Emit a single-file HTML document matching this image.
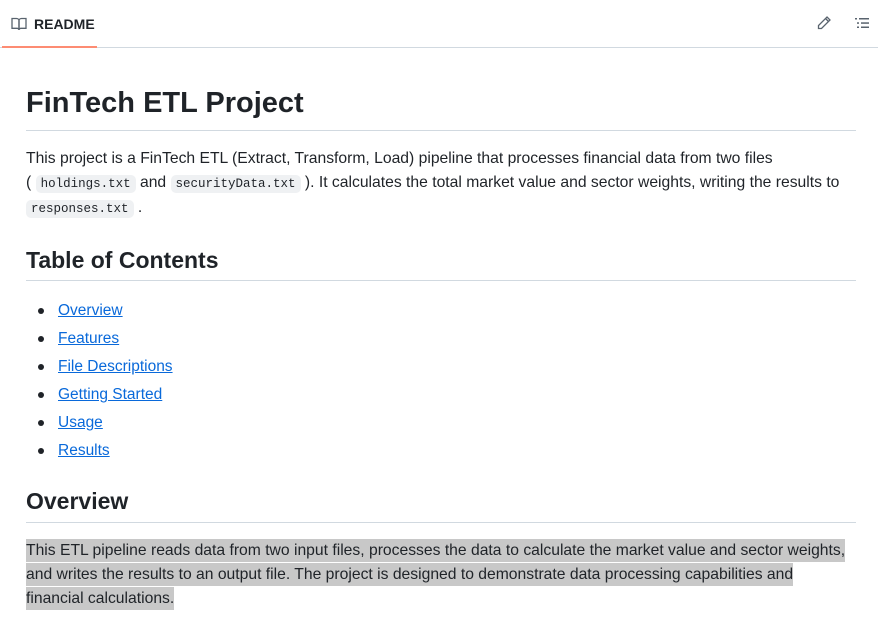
<!DOCTYPE html>
<html><head><meta charset="utf-8"><style>
*{margin:0;padding:0;box-sizing:border-box}
body{width:878px;height:628px;overflow:hidden;background:#fff;font-family:"Liberation Sans",sans-serif;color:#1f2328;position:relative}
.hdr{position:absolute;left:0;top:0;width:878px;height:48px;border-bottom:1px solid #d1d9e0}
.tab{position:absolute;left:2px;top:0;width:95px;height:48px;border-bottom:2px solid #fd8c73}
.tab span{position:absolute;left:32px;top:16px;font-size:14px;font-weight:bold;color:#1f2328}
h1{position:absolute;left:26px;top:85px;font-size:29px;font-weight:600;line-height:36px}
h2{position:absolute;left:26px;font-size:23px;font-weight:600;line-height:30px}
.rule{position:absolute;left:26px;width:830px;height:1px;background:#d1d9e0}
.p{position:absolute;left:26px;font-size:15.7px;line-height:24px;white-space:nowrap}
code{font-family:"Liberation Mono",monospace;font-size:12.5px;background:#eff1f3;padding:2px 5px;border-radius:5px}
ul{position:absolute;left:38px;top:297px;list-style:none}
li{font-size:15.5px;line-height:28px;position:relative;padding-left:20px}
li:before{content:"";position:absolute;left:0;top:11px;width:6px;height:6px;border-radius:50%;background:#1f2328}
li a{color:#0969da;text-decoration:underline}
.hl{background:#c8c8c8;padding:3px 0}
</style></head><body>
<div class="hdr"><div class="tab">
<svg style="position:absolute;left:9px;top:16px" width="16" height="16" viewBox="0 0 16 16" fill="none" stroke="#59636e" stroke-width="1.3"><path d="M1 2.5h4.5c1.4 0 2.5 1 2.5 2.3V14c0-1-1-1.7-2-1.7H1z"/><path d="M15 2.5h-4.5C9.1 2.5 8 3.5 8 4.8V14c0-1 1-1.7 2-1.7h5z"/></svg>
<span>README</span></div>
<svg style="position:absolute;left:816px;top:15px" width="16" height="16" viewBox="0 0 16 16" fill="none" stroke="#59636e" stroke-width="1.3"><path d="M11 2l3 3-8.5 8.5H2.5v-3z"/><path d="M9.5 3.5l3 3"/></svg>
<svg style="position:absolute;left:854px;top:15px" width="16" height="16" viewBox="0 0 16 16" fill="#59636e"><rect x="1" y="3" width="2" height="1.5"/><rect x="5" y="3" width="10" height="1.5"/><rect x="3" y="7.3" width="2" height="1.5"/><rect x="7" y="7.3" width="8" height="1.5"/><rect x="3" y="11.5" width="2" height="1.5"/><rect x="7" y="11.5" width="8" height="1.5"/></svg>
</div>
<h1>FinTech ETL Project</h1>
<div class="rule" style="top:130px"></div>
<div class="p" style="top:147px">This project is a FinTech ETL (Extract, Transform, Load) pipeline that processes financial data from two files<br>( <code>holdings.txt</code> and <code>securityData.txt</code> ). It calculates the total market value and sector weights, writing the results to<br><code>responses.txt</code> .</div>
<h2 style="top:245px">Table of Contents</h2>
<div class="rule" style="top:280px"></div>
<ul><li><a>Overview</a></li><li><a>Features</a></li><li><a>File Descriptions</a></li><li><a>Getting Started</a></li><li><a>Usage</a></li><li><a>Results</a></li></ul>
<h2 style="top:486px">Overview</h2>
<div class="rule" style="top:522px"></div>
<div class="p" style="top:539px"><span class="hl">This ETL pipeline reads data from two input files, processes the data to calculate the market value and sector weights,</span><br><span class="hl">and writes the results to an output file. The project is designed to demonstrate data processing capabilities and</span><br><span class="hl">financial calculations.</span></div>
</body></html>
